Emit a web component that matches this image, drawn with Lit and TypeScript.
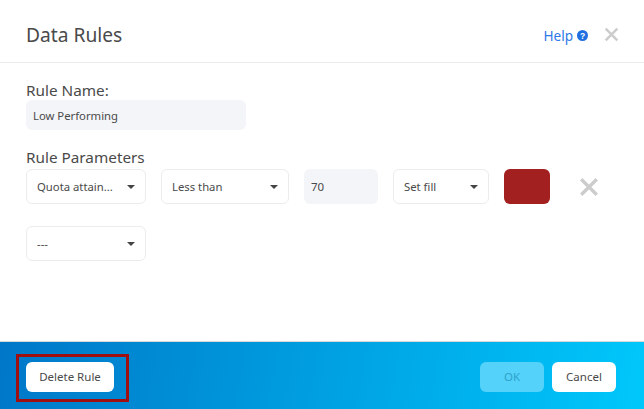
import { LitElement, css, html, svg } from "lit";
import { customElement } from "lit/decorators.js";

const closeIcon = (size: number) => html`<svg class="close" width=${size} height=${size} viewBox="0 0 18 18">
  ${svg`<path d="M2 2L16 16M16 2L2 16" stroke="#cccccc" stroke-width="3" fill="none"/>`}
</svg>`;

@customElement("app-root")
export class AppRoot extends LitElement {
  static styles = css`
    :host {
      display: flex;
      flex-direction: column;
      height: 409px;
      background: #fff;
      font-family: "Noto Sans", Roboto, sans-serif;
      color: #4a4a4a;
      overflow: hidden;
    }
    .header {
      height: 56px;
      display: flex;
      align-items: center;
      padding: 6px 25px 0 26px;
      border-bottom: 1px solid #ebebeb;
      flex: none;
    }
    .title {
      font-size: 19.2px;
      flex: 1;
    }
    .help {
      display: flex;
      align-items: center;
      gap: 4px;
      color: #2f78e8;
      font-size: 13.6px;
      margin-right: 16px;
      padding-top: 2px;
    }
    .body {
      flex: 1;
      padding: 17px 26px 0;
    }
    .label {
      font-size: 15.3px;
      line-height: 20px;
    }
    .name-input {
      width: 220px;
      height: 30px;
      box-sizing: border-box;
      background: #f4f5f8;
      border-radius: 6px;
      padding-left: 7px;
      font-size: 11.3px;
      display: flex;
      align-items: center;
      margin-bottom: 17px;
    }
    .params {
      margin-bottom: 2px;
    }
    .row {
      display: flex;
      align-items: center;
      gap: 15px;
      margin-bottom: 22px;
    }
    .select {
      height: 35px;
      box-sizing: border-box;
      border: 1px solid #ececec;
      border-radius: 6px;
      padding: 0 10px 0 10px;
      font-size: 11.3px;
      display: flex;
      align-items: center;
      justify-content: space-between;
    }
    .caret {
      width: 0;
      height: 0;
      border-left: 4px solid transparent;
      border-right: 4px solid transparent;
      border-top: 4px solid #444;
    }
    .num {
      width: 74px;
      height: 35px;
      box-sizing: border-box;
      background: #f4f5f8;
      border-radius: 6px;
      padding-left: 7px;
      font-size: 11.5px;
      display: flex;
      align-items: center;
    }
    .swatch {
      width: 46px;
      height: 35px;
      background: #a32020;
      border-radius: 6px;
    }
    .row .close {
      margin-left: 14px;
    }
    .footer {
      height: 65px;
      flex: none;
      border-top: 1px solid #d9d9d9;
      background: linear-gradient(100deg, #0077c8, #00c8fb);
      display: flex;
      align-items: center;
      padding: 2px 28px 0 26px;
      gap: 8px;
    }
    .btn {
      height: 30px;
      box-sizing: border-box;
      border-radius: 6px;
      background: #fff;
      font-size: 11.5px;
      display: flex;
      align-items: center;
      justify-content: center;
    }
    .delete {
      position: relative;
      width: 88px;
      margin-right: auto;
    }
    .delete::after {
      content: "";
      position: absolute;
      left: -10px;
      top: -8px;
      width: 113px;
      height: 48px;
      box-sizing: border-box;
      border: 3px solid #a00f0f;
    }
    .ok {
      width: 64px;
      background: #54d2f9;
      color: #2fa3cd;
    }
    .cancel {
      width: 64px;
    }
  `;

  private select(text: string, width: number) {
    return html`<div class="select" style="width:${width}px"><span>${text}</span><i class="caret"></i></div>`;
  }

  render() {
    return html`
      <div class="header">
        <div class="title">Data Rules</div>
        <div class="help">
          Help
          <svg width="11" height="11" viewBox="0 0 11 11">
            <circle cx="5.5" cy="5.5" r="5.5" fill="#1f6fe0" />
            <text x="5.5" y="8.6" font-size="8.5" font-weight="700" text-anchor="middle" fill="#fff" font-family="Liberation Sans">?</text>
          </svg>
        </div>
        ${closeIcon(15)}
      </div>
      <div class="body">
        <div class="label">Rule Name:</div>
        <div class="name-input">Low Performing</div>
        <div class="label params">Rule Parameters</div>
        <div class="row">
          ${this.select("Quota attain...", 120)}
          ${this.select("Less than", 128)}
          <div class="num">70</div>
          ${this.select("Set fill", 96)}
          <div class="swatch"></div>
          ${closeIcon(20)}
        </div>
        <div class="row">${this.select("---", 120)}</div>
      </div>
      <div class="footer">
        <div class="btn delete">Delete Rule</div>
        <div class="btn ok">OK</div>
        <div class="btn cancel">Cancel</div>
      </div>
    `;
  }
}
